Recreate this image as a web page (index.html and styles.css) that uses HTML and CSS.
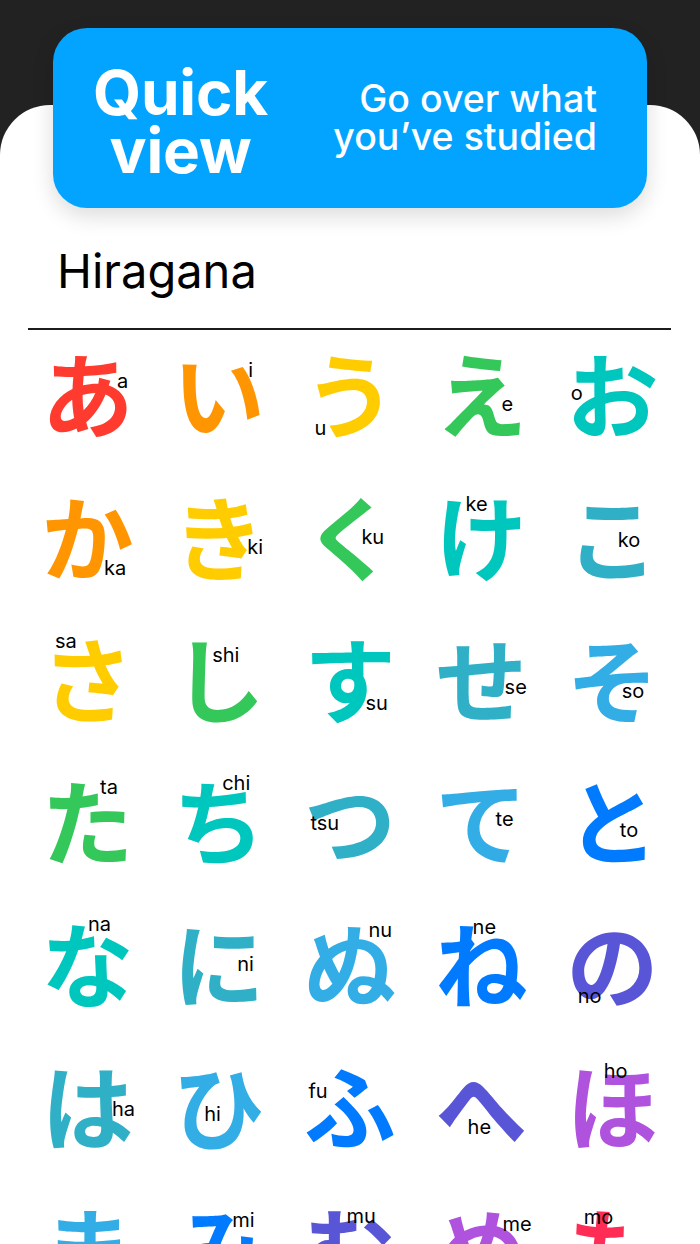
FILE: index.html
```html
<!DOCTYPE html>
<html lang="en">
<head>
<meta charset="utf-8">
<title>Quick view</title>
<link rel="stylesheet" href="styles.css">
</head>
<body>
<div class="top">
  <div class="banner">
    <div class="banner-title">Quick<br>view</div>
    <div class="banner-sub">Go over what<br>you’ve studied</div>
  </div>
</div>
<main class="sheet">
  <h1 class="heading">Hiragana</h1>
  <div class="divider"></div>
  <div class="grid">
    <div class="cell c0"><span class="kana">あ</span><span class="romaji" style="--x:95px;--y:51px">a</span></div>
    <div class="cell c1"><span class="kana">い</span><span class="romaji" style="--x:95px;--y:40px">i</span></div>
    <div class="cell c2"><span class="kana">う</span><span class="romaji" style="--x:30px;--y:98px">u</span></div>
    <div class="cell c3"><span class="kana">え</span><span class="romaji" style="--x:86px;--y:74px">e</span></div>
    <div class="cell c4"><span class="kana">お</span><span class="romaji" style="--x:24px;--y:63px">o</span></div>

    <div class="cell c1"><span class="kana">か</span><span class="romaji" style="--x:82px;--y:96px">ka</span></div>
    <div class="cell c2"><span class="kana">き</span><span class="romaji" style="--x:94px;--y:75px">ki</span></div>
    <div class="cell c3"><span class="kana">く</span><span class="romaji" style="--x:77px;--y:65px">ku</span></div>
    <div class="cell c4"><span class="kana">け</span><span class="romaji" style="--x:50px;--y:32px">ke</span></div>
    <div class="cell c5"><span class="kana">こ</span><span class="romaji" style="--x:71px;--y:68px">ko</span></div>

    <div class="cell c2"><span class="kana">さ</span><span class="romaji" style="--x:33px;--y:26px">sa</span></div>
    <div class="cell c3"><span class="kana">し</span><span class="romaji" style="--x:59px;--y:40px">shi</span></div>
    <div class="cell c4"><span class="kana">す</span><span class="romaji" style="--x:81px;--y:88px">su</span></div>
    <div class="cell c5"><span class="kana">せ</span><span class="romaji" style="--x:89px;--y:72px">se</span></div>
    <div class="cell c6"><span class="kana">そ</span><span class="romaji" style="--x:75px;--y:76px">so</span></div>

    <div class="cell c3"><span class="kana">た</span><span class="romaji" style="--x:78px;--y:30px">ta</span></div>
    <div class="cell c4"><span class="kana">ち</span><span class="romaji" style="--x:69px;--y:26px">chi</span></div>
    <div class="cell c5"><span class="kana">つ</span><span class="romaji" style="--x:26px;--y:66px">tsu</span></div>
    <div class="cell c6"><span class="kana">て</span><span class="romaji" style="--x:80px;--y:62px">te</span></div>
    <div class="cell c7"><span class="kana">と</span><span class="romaji" style="--x:73px;--y:73px">to</span></div>

    <div class="cell c4"><span class="kana">な</span><span class="romaji" style="--x:66px;--y:24px">na</span></div>
    <div class="cell c5"><span class="kana">に</span><span class="romaji" style="--x:84px;--y:64px">ni</span></div>
    <div class="cell c6"><span class="kana">ぬ</span><span class="romaji" style="--x:84px;--y:30px">nu</span></div>
    <div class="cell c7"><span class="kana">ね</span><span class="romaji" style="--x:57px;--y:27px">ne</span></div>
    <div class="cell c8"><span class="kana">の</span><span class="romaji" style="--x:31px;--y:96px">no</span></div>

    <div class="cell c5"><span class="kana">は</span><span class="romaji" style="--x:90px;--y:67px">ha</span></div>
    <div class="cell c6"><span class="kana">ひ</span><span class="romaji" style="--x:51px;--y:72px">hi</span></div>
    <div class="cell c7"><span class="kana">ふ</span><span class="romaji" style="--x:24px;--y:49px">fu</span></div>
    <div class="cell c8"><span class="kana">へ</span><span class="romaji" style="--x:52px;--y:85px">he</span></div>
    <div class="cell c9"><span class="kana">ほ</span><span class="romaji" style="--x:57px;--y:29px">ho</span></div>

    <div class="cell c6"><span class="kana">ま</span><span class="romaji" style="--x:84px;--y:84px">ma</span></div>
    <div class="cell c7"><span class="kana">み</span><span class="romaji" style="--x:79px;--y:36px">mi</span></div>
    <div class="cell c8"><span class="kana">む</span><span class="romaji" style="--x:62px;--y:32px">mu</span></div>
    <div class="cell c9"><span class="kana">め</span><span class="romaji" style="--x:87px;--y:40px">me</span></div>
    <div class="cell c10"><span class="kana">も</span><span class="romaji" style="--x:37px;--y:33px">mo</span></div>
  </div>
</main>
</body>
</html>
```
FILE: styles.css
```css
html, body {
  margin: 0;
  padding: 0;
}
body {
  background: #222222;
  font-family: "Inter", "Liberation Sans", sans-serif;
  width: 700px;
  height: 1244px;
  overflow: hidden;
}
.top {
  padding: 28px 53px 0 53px;
}
.banner {
  position: relative;
  z-index: 1;
  height: 180px;
  box-sizing: border-box;
  background: #02a4ff;
  border-radius: 34px;
  box-shadow: 0 8px 22px rgba(0, 0, 0, 0.14);
  display: flex;
  align-items: center;
  justify-content: space-between;
  padding: 0 50px 0 40px;
  color: #ffffff;
}
.banner-title {
  font-weight: 700;
  font-size: 62px;
  line-height: 58px;
  text-align: center;
  letter-spacing: -0.2px;
  padding-top: 8px;
}
.banner-sub {
  font-weight: 500;
  font-size: 37.5px;
  line-height: 38px;
  text-align: right;
}
.sheet {
  margin-top: -103px;
  background: #ffffff;
  border-radius: 50px 50px 0 0;
  padding-top: 103px;
  min-height: 1300px;
}
.heading {
  margin: 35px 0 0 57px;
  font-weight: 400;
  font-size: 47px;
  line-height: 56px;
  color: #000000;
}
.divider {
  margin: 29px 29px 0 28px;
  height: 2px;
  background: #1c1c1c;
}
.grid {
  margin-top: -10px;
  padding: 0 22px;
  display: grid;
  grid-template-columns: repeat(5, 1fr);
  grid-auto-rows: 142.4px;
}
.cell {
  position: relative;
  display: flex;
  align-items: center;
  justify-content: center;
}
.kana {
  font-family: "Noto Sans CJK JP", sans-serif;
  font-weight: 700;
  font-size: 92px;
  line-height: 142px;
}
.romaji {
  position: absolute;
  left: var(--x);
  top: var(--y);
  font-family: "Inter", "Liberation Sans", sans-serif;
  font-size: 20px;
  line-height: 20px;
  color: #000000;
}
.c0 { color: #ff3b30; }
.c1 { color: #ff9500; }
.c2 { color: #ffcc00; }
.c3 { color: #34c759; }
.c4 { color: #00c7be; }
.c5 { color: #30b0c7; }
.c6 { color: #32ade6; }
.c7 { color: #007aff; }
.c8 { color: #5856d6; }
.c9 { color: #af52de; }
.c10 { color: #ff2d55; }
```
